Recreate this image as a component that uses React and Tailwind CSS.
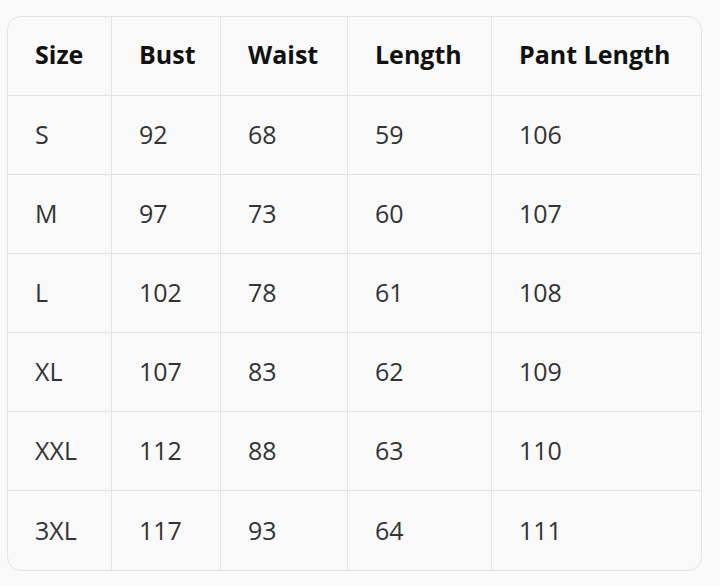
import React from 'react'

const HEADERS = ['Size', 'Bust', 'Waist', 'Length', 'Pant Length']

const ROWS = [
  ['S', '92', '68', '59', '106'],
  ['M', '97', '73', '60', '107'],
  ['L', '102', '78', '61', '108'],
  ['XL', '107', '83', '62', '109'],
  ['XXL', '112', '88', '63', '110'],
  ['3XL', '117', '93', '64', '111'],
]

export default function App() {
  const allRows = [HEADERS, ...ROWS]

  return (
    <div className="min-h-[586px] bg-[#f9f9f9] pt-[16px] pl-[7px] font-['Open_Sans',sans-serif]">
      <div className="w-[695px] rounded-[14px] border border-[#e3e3e3] overflow-hidden">
        <div className="grid grid-cols-[104px_109px_127px_144px_1fr]">
          {allRows.map((row, r) =>
            row.map((cell, c) => (
              <div
                key={`${r}-${c}`}
                className={`h-[79px] flex items-center pl-[27px] text-[25px] ${
                  c < row.length - 1 ? 'border-r border-[#e3e3e3]' : ''
                } ${r < allRows.length - 1 ? 'border-b border-[#e3e3e3]' : ''} ${
                  r === 0 ? 'font-bold text-[#111] pb-[2px]' : 'text-[#333]'
                }`}
              >
                {cell}
              </div>
            ))
          )}
        </div>
      </div>
    </div>
  )
}
